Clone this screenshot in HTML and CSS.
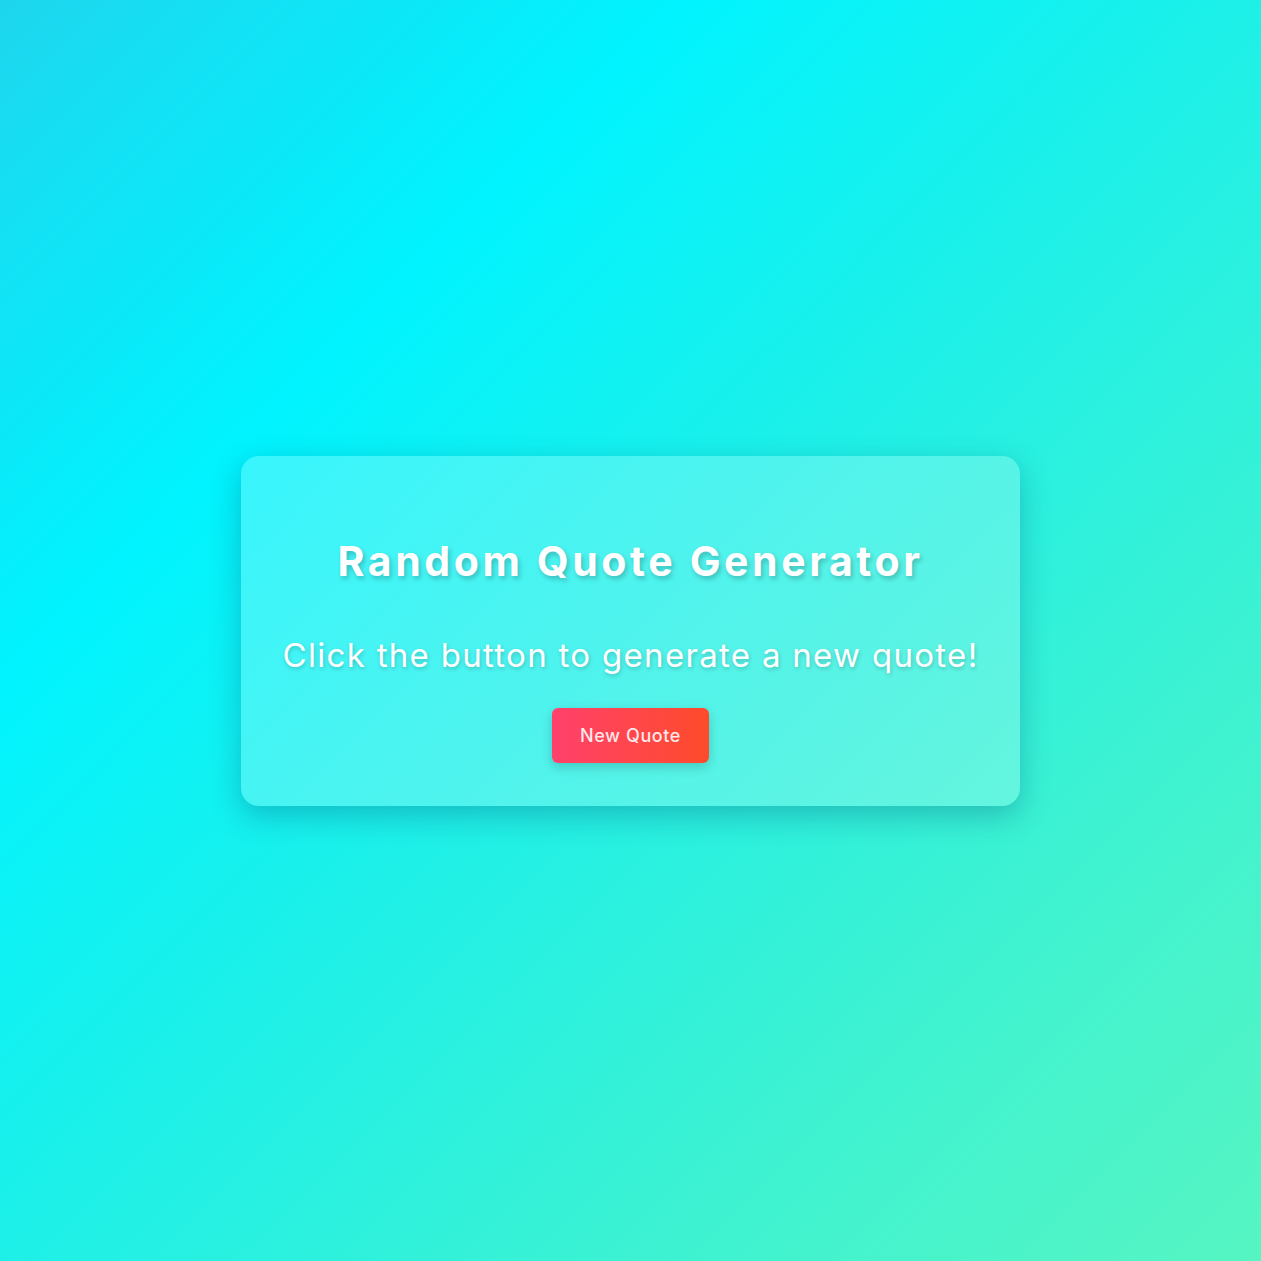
FILE: index.html
```html
<!DOCTYPE html>
<html lang="en">
<head>
<meta charset="UTF-8">
<title>Random Quote Generator</title>
<link rel="stylesheet" href="styles.css">
</head>
<body>
  <main class="card">
    <h1 class="title">Random Quote Generator</h1>
    <p class="quote">Click the button to generate a new quote!</p>
    <button class="btn" type="button">New Quote</button>
  </main>
</body>
</html>
```
FILE: styles.css
```css
html, body {
  margin: 0;
  height: 100%;
}
body {
  font-family: "Inter", "Open Sans", sans-serif;
  background: linear-gradient(135deg, #1ed6ee 0%, #00f3fe 27%, #1ef0e8 50%, #3cf2d2 75%, #56f5c2 100%);
  display: flex;
  align-items: center;
  justify-content: center;
}
.card {
  box-sizing: border-box;
  width: 779px;
  height: 350px;
  padding: 80px 40px 40px;
  border-radius: 18px;
  background: rgba(255, 255, 255, 0.22);
  box-shadow: 0 10px 30px rgba(0, 70, 110, 0.3);
  display: flex;
  flex-direction: column;
  align-items: center;
  text-align: center;
}
.title {
  margin: 0;
  font-size: 41px;
  font-weight: 700;
  line-height: 50px;
  letter-spacing: 3.6px;
  color: #ffffff;
  text-shadow: 2px 3px 5px rgba(0, 0, 0, 0.22);
  white-space: nowrap;
}
.quote {
  margin: 49px 0 0;
  font-size: 33px;
  font-weight: 400;
  line-height: 40px;
  letter-spacing: 1.3px;
  color: #ffffff;
  text-shadow: 1px 2px 4px rgba(0, 0, 0, 0.2);
  white-space: nowrap;
}
.btn {
  margin-top: 33px;
  width: 157px;
  height: 55px;
  border: none;
  border-radius: 6px;
  background: linear-gradient(90deg, #ff416c, #ff4b2b);
  color: #ffe6ea;
  font-family: inherit;
  font-size: 18px;
  font-weight: 500;
  letter-spacing: 0.6px;
  box-shadow: 0 4px 12px rgba(0, 0, 0, 0.18);
  cursor: pointer;
}
```
